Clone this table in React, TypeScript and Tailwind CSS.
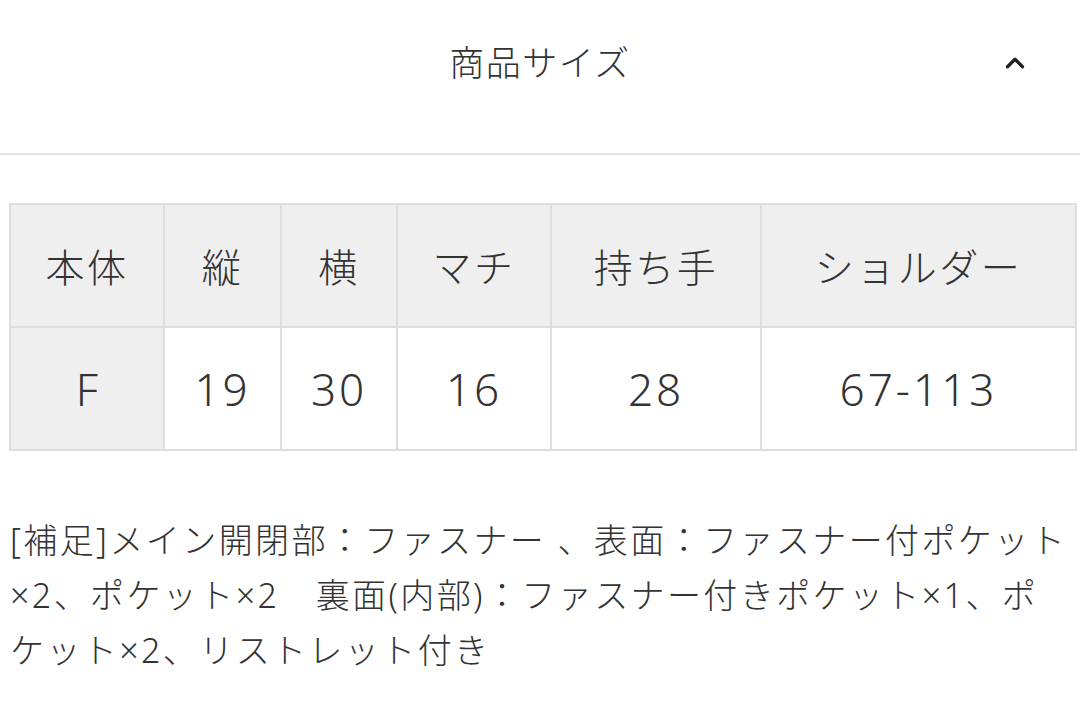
import { ChevronUp } from 'lucide-react';

const headers = ['本体', '縦', '横', 'マチ', '持ち手', 'ショルダー'];
const values = ['19', '30', '16', '28', '67-113'];
const widths = ['w-[154px]', 'w-[117px]', 'w-[116px]', 'w-[154px]', 'w-[210px]', 'w-auto'];

export default function App() {
  return (
    <div className="min-h-[712px] w-[1080px] bg-white font-light text-[#333] [font-family:'Noto_Sans_CJK_JP','Noto_Sans',sans-serif]">
      {/* accordion header */}
      <div className="relative flex h-[155px] items-center justify-center border-b-2 border-[#e2e2e2] pb-[30px]">
        <h2 className="text-[35px] tracking-[1.5px]">商品サイズ</h2>
        <ChevronUp className="absolute right-[50px] top-[48px] h-[30px] w-[30px] text-[#222]" strokeWidth={2.6} />
      </div>

      <div className="px-[9px] pt-[48px]">
        <table className="w-[1068px] table-fixed border-collapse border-2 border-[#dedede] text-center text-[39px]">
          <tbody>
            <tr className="h-[123px] bg-[#efefef]">
              {headers.map((h, i) => (
                <td key={h} className={`${widths[i]} border-2 border-[#dedede] tracking-[2.5px]`}>
                  {h}
                </td>
              ))}
            </tr>
            <tr className="h-[123px] text-[44px] [font-family:'Noto_Sans','Noto_Sans_CJK_JP',sans-serif]">
              <td className="border-2 border-[#dedede] bg-[#efefef]">F</td>
              {values.map((v, i) => (
                <td key={i} className="border-2 border-[#dedede] bg-white tracking-[3px]">
                  {v}
                </td>
              ))}
            </tr>
          </tbody>
        </table>
      </div>

      <p className="px-[10px] pt-[62px] text-[34px] leading-[55px] tracking-[2.4px] [font-family:'Noto_Sans','Noto_Sans_CJK_JP',sans-serif]">
        [補足]メイン開閉部：ファスナー 、表面：ファスナー付ポケット×2、ポケット×2　裏面(内部)：ファスナー付きポケット×1、ポケット×2、リストレット付き
      </p>
    </div>
  );
}
